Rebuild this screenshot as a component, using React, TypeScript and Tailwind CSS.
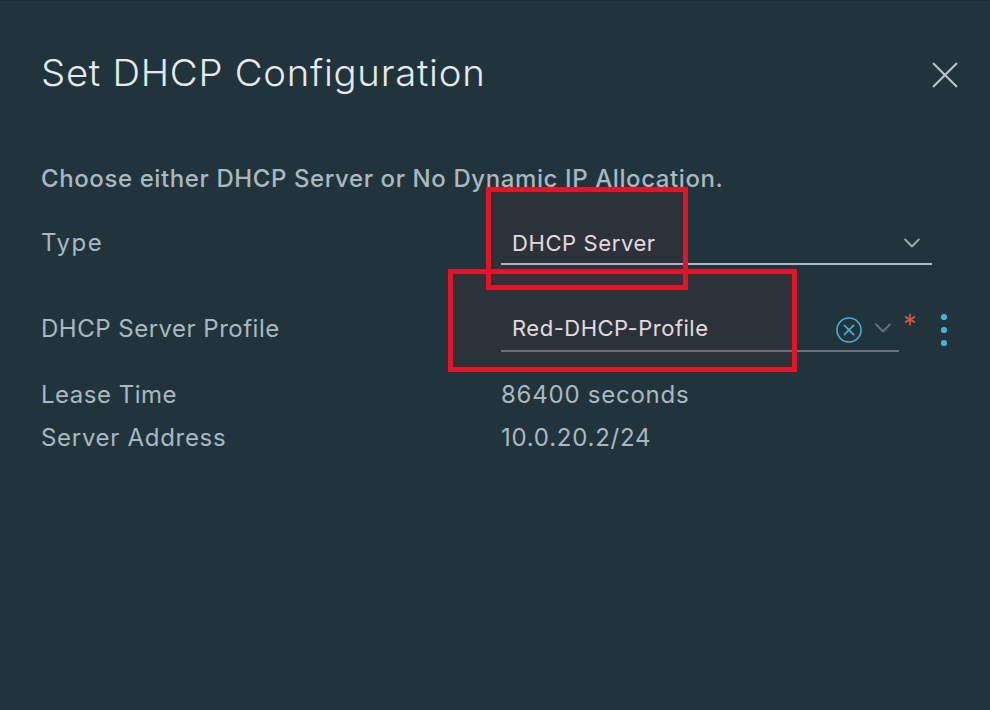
import React from 'react';

function Chevron({ className }: { className: string }) {
  return (
    <svg width="16" height="11" viewBox="0 0 16 11" fill="none" className={className}>
      <path d="M1.2 1.5 8 8.5 14.8 1.5" stroke="currentColor" strokeWidth="2" strokeLinecap="round" strokeLinejoin="round" />
    </svg>
  );
}

function Row({ label, value, tracking }: { label: string; value: string; tracking: string }) {
  return (
    <div className="flex h-[43px] items-center">
      <span className={`w-[460px] shrink-0 ${tracking}`}>{label}</span>
      <span className="tracking-[0.75px]">{value}</span>
    </div>
  );
}

export default function App() {
  return (
    <main className="relative h-[710px] w-[990px] overflow-hidden border-t border-[#1d2c32] bg-[#22343b] pl-[41px] font-['Inter','Open_Sans',sans-serif] text-2xl leading-8 font-[370] whitespace-nowrap text-[#a9b8c1]">
      <header className="flex h-[144px] items-center justify-between pr-8">
        <h1 className="origin-left scale-x-[1.035] text-[37px] leading-[48px] font-[320] tracking-[0.7px] text-[#e4eaf0]">Set DHCP Configuration</h1>
        <svg width="26" height="26" viewBox="0 0 26 26" fill="none" stroke="#b5c2c8" strokeWidth="2.2" strokeLinecap="round" className="mt-[4px]">
          <path d="M1.7 1.7 24.3 24.3M24.3 1.7 1.7 24.3" />
        </svg>
      </header>

      <p className="mt-[18px] font-[470] tracking-[0.6px]">Choose either DHCP Server or No Dynamic IP Allocation.</p>

      <div className="mt-[27px] flex h-[43px]">
        <span className="w-[460px] shrink-0 pt-[5px] tracking-[1.5px]">Type</span>
        <div className="flex w-[431px] justify-between border-b-2 border-[#adbbc4] pt-[5px] pr-[12px] pl-[11px] text-[22px] text-[#e5e4e9]">
          <span className="tracking-[0.6px]">DHCP Server</span>
          <Chevron className="mt-[11px] text-[#9ba6ac]" />
        </div>
      </div>

      <div className="mt-[43px] flex h-[44px]">
        <span className="w-[460px] shrink-0 pt-[5px] tracking-[0.5px]">DHCP Server Profile</span>
        <div className="flex w-[398px] border-b-2 border-[#66727a] pt-[4px] pr-[8px] pl-[11px] text-[22px] text-[#e5e4e9]">
          <span className="flex-1 tracking-[0.5px]">Red-DHCP-Profile</span>
          <svg width="26" height="26" viewBox="0 0 26 26" fill="none" stroke="#49afd9" strokeWidth="1.6" strokeLinecap="round" className="mt-[5px] mr-[13px]">
            <circle cx="13" cy="13" r="12" />
            <path d="m8.4 8.4 9.2 9.2M17.6 8.4l-9.2 9.2" />
          </svg>
          <Chevron className="mt-[11px] text-[#66727a]" />
        </div>
        <svg width="12" height="13" viewBox="0 0 12 13" stroke="#d64e44" strokeWidth="1.8" className="mt-[5px] ml-[5px]">
          <path d="M6 .8v11.4M1 3.6l10 5.8M11 3.6 1 9.4" />
        </svg>
        <svg width="8" height="34" viewBox="0 0 8 34" fill="#49afd9" className="mt-[5px] ml-[23.5px]">
          <circle cx="4" cy="4" r="3.1" />
          <circle cx="4" cy="17" r="3.1" />
          <circle cx="4" cy="30" r="3.1" />
        </svg>
      </div>

      <div className="mt-[21px]">
        <Row label="Lease Time" value="86400 seconds" tracking="tracking-[0.5px]" />
        <Row label="Server Address" value="10.0.20.2/24" tracking="tracking-[0.7px]" />
      </div>

      <div className="absolute top-[186px] left-[486px] h-[103px] w-[202px] border-5 border-[#e21428] bg-[#e21428]/5" />
      <div className="absolute top-[268px] left-[448px] h-[103px] w-[349px] border-5 border-[#e21428] bg-[#e21428]/5" />
    </main>
  );
}
